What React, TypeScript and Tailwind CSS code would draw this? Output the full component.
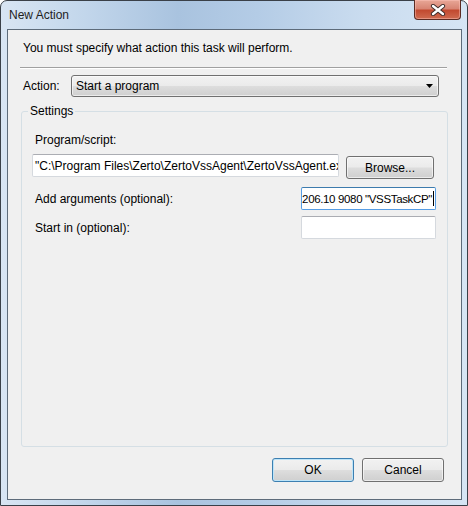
import React from "react";

const btnBg =
  "bg-[linear-gradient(to_bottom,#f2f2f2_0%,#ebebeb_48%,#dddddd_52%,#cfcfcf_100%)]";

export default function App() {
  return (
    <div className="w-[468px] h-[506px] bg-white font-['Liberation_Sans',Arial,sans-serif] text-[12px] text-black">
      <div className="relative w-[468px] h-[506px] rounded-t-[7px] border border-[#3a4048] flex flex-col bg-[linear-gradient(to_right,#d8e5f3_0%,#c2d6eb_18%,#a9c3df_38%,#b4cce6_55%,#cadcef_78%,#d6e5f4_100%)]">
        {/* title bar */}
        <div className="h-[28px] flex items-center pl-[8px] shrink-0">
          <span className="leading-[16px] text-[#1e1e1e]">New Action</span>
        </div>
        {/* close button */}
        <div className="absolute top-[-1px] right-[6px] w-[47px] h-[20px] rounded-b-[4px] border border-t-0 border-[#5b2b23] bg-[linear-gradient(to_bottom,#e8a797_0%,#d88574_45%,#c24a30_55%,#cf6b50_100%)] shadow-[inset_0_0_0_1px_rgba(255,200,190,0.45)] flex items-center justify-center">
          <svg width="16" height="12" viewBox="0 0 16 12">
            <path d="M3 2 L13 10 M13 2 L3 10" stroke="#3b2a28" strokeWidth="4.2" strokeLinecap="round" />
            <path d="M3 2 L13 10 M13 2 L3 10" stroke="#ffffff" strokeWidth="2.4" strokeLinecap="round" />
          </svg>
        </div>
        {/* client area */}
        <div className="ml-[6px] mr-[5px] mb-[5px] flex-1 border border-[#5d6b7a] bg-[#f0f0f0] flex flex-col">
          <p className="ml-[15px] mt-[10px] leading-[16px]">
            You must specify what action this task will perform.
          </p>
          <div className="mt-[11px] ml-[12px] mr-[14px] border-t border-t-[#a0a0a0] border-b border-b-white" />
          <div className="mt-[6px] flex items-center">
            <span className="ml-[15px] w-[48px] leading-[16px]">Action:</span>
            <div
              className={`w-[368px] h-[22px] rounded-[3px] border border-[#707070] ${btnBg} shadow-[inset_0_0_0_1px_rgba(255,255,255,0.6)] flex items-center justify-between pl-[4px] pr-[5px]`}
            >
              <span className="leading-[16px]">Start a program</span>
              <svg width="7" height="4" viewBox="0 0 7 4">
                <path d="M0 0 H7 L3.5 4 Z" fill="#000" />
              </svg>
            </div>
          </div>
          <fieldset className="mt-[6px] ml-[13px] w-[427px] h-[344px] rounded-[3px] border border-[#d5dfe5] p-0 m-0 shrink-0">
            <legend className="ml-[6px] px-[2px] leading-[16px]">Settings</legend>
            <div className="flex flex-col">
              <span className="ml-[13px] mt-[13px] leading-[16px]">Program/script:</span>
              <div className="mt-[6px] flex items-start">
                <div className="ml-[10px] w-[307px] h-[23px] rounded-[2px] border border-[#d5d9de] border-t-[#abadb3] bg-white overflow-hidden flex items-center pl-[2px]">
                  <span className="whitespace-nowrap leading-[16px]">
                    "C:\Program Files\Zerto\ZertoVssAgent\ZertoVssAgent.exe"
                  </span>
                </div>
                <div
                  className={`ml-[7px] mt-[2px] w-[88px] h-[23px] rounded-[3px] border border-[#707070] ${btnBg} shadow-[inset_0_0_0_1px_rgba(255,255,255,0.6)] flex items-center justify-center`}
                >
                  <span className="leading-[16px]">Browse...</span>
                </div>
              </div>
              <div className="mt-[8px] flex items-center justify-between pr-[11px]">
                <span className="ml-[13px] leading-[16px]">Add arguments (optional):</span>
                <div className="w-[135px] h-[23px] rounded-[2px] border border-[#569de5] border-t-[#3d7bad] bg-white overflow-hidden flex items-center justify-end pr-[1px]">
                  <span className="whitespace-nowrap leading-[16px] text-[11.5px] tracking-[-0.35px] shrink-0">206.10 9080 "VSSTaskCP"</span>
                  <span className="w-[1px] h-[15px] bg-black ml-[1px] shrink-0" />
                </div>
              </div>
              <div className="mt-[6px] flex items-center justify-between pr-[11px]">
                <span className="ml-[13px] leading-[16px]">Start in (optional):</span>
                <div className="w-[135px] h-[23px] rounded-[2px] border border-[#d5d9de] border-t-[#abadb3] bg-white" />
              </div>
            </div>
          </fieldset>
          <div className="mt-[11px] mr-[17px] flex justify-end gap-[8px]">
            <div
              className={`w-[82px] h-[24px] rounded-[3px] border border-[#3c7fb1] ${btnBg} shadow-[inset_0_0_0_1px_#bde4f8] flex items-center justify-center`}
            >
              <span className="leading-[16px]">OK</span>
            </div>
            <div
              className={`w-[82px] h-[24px] rounded-[3px] border border-[#707070] ${btnBg} shadow-[inset_0_0_0_1px_rgba(255,255,255,0.6)] flex items-center justify-center`}
            >
              <span className="leading-[16px]">Cancel</span>
            </div>
          </div>
        </div>
      </div>
    </div>
  );
}
